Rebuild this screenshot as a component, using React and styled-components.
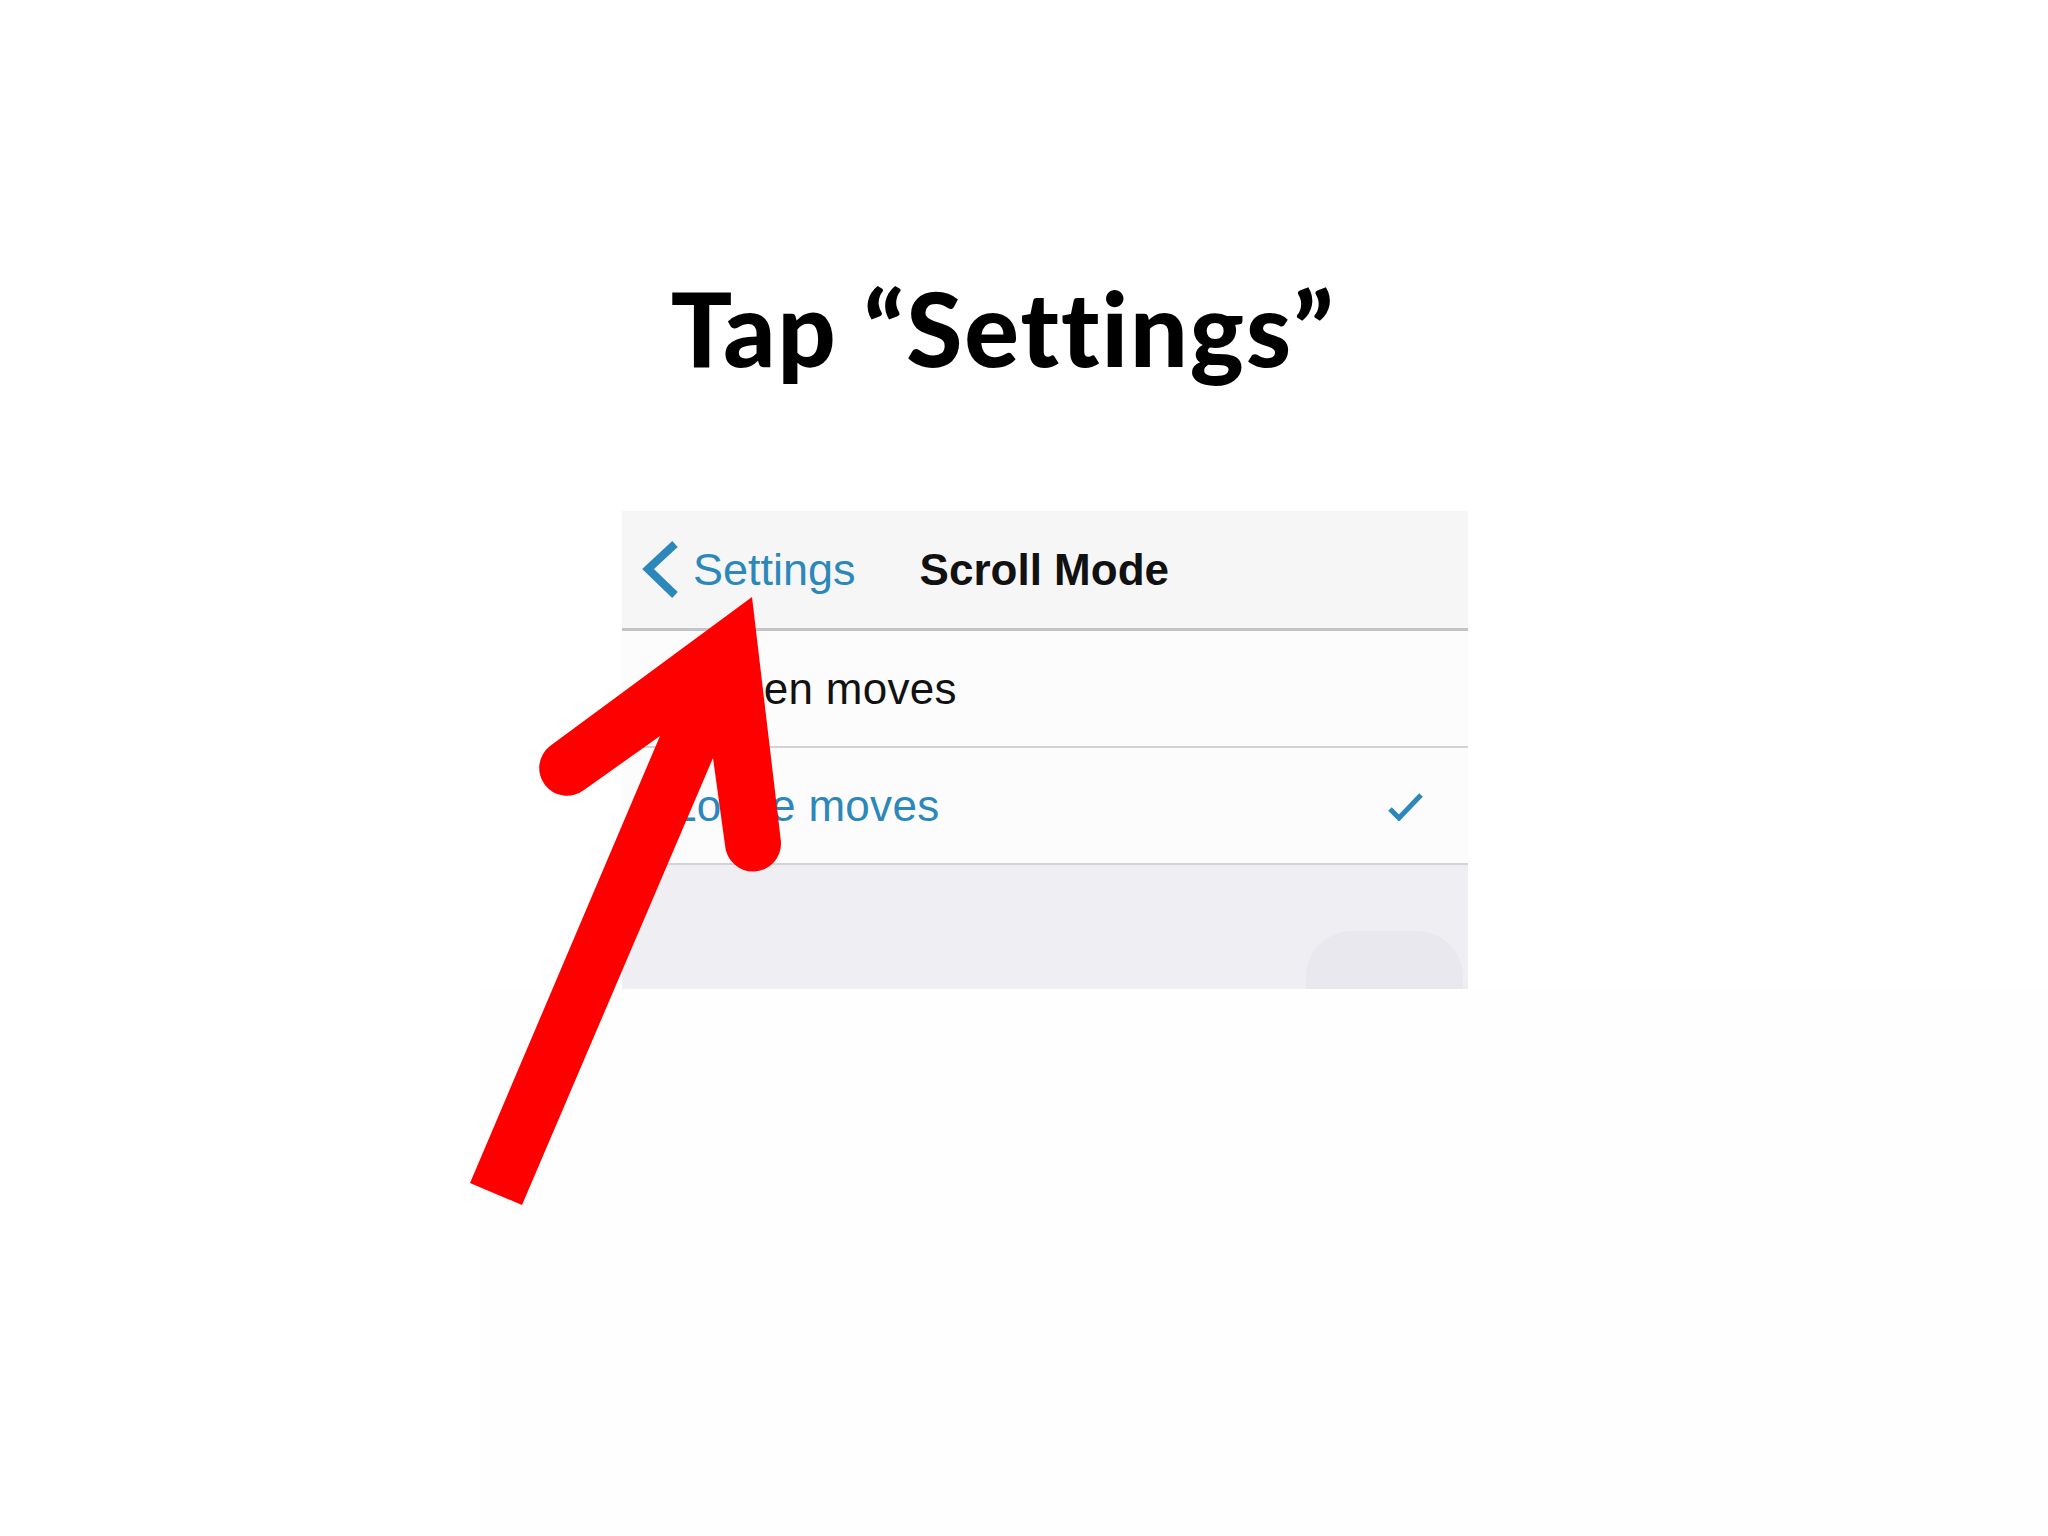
import React from 'react';
import styled, { createGlobalStyle } from 'styled-components';

const GlobalStyle = createGlobalStyle`
html, body {
  margin: 0;
  padding: 0;
  background: #ffffff;
}
body {
  width: 2048px;
  height: 1536px;
  overflow: hidden;
  font-family: "Liberation Sans", Arial, sans-serif;
}
`;

const Page = styled.div`
position: relative;
width: 2048px;
height: 1536px;
display: flex;
flex-direction: column;
`;

const Title = styled.h1`
margin: 267px 0 0 0;
padding-right: 42px;
font-family: Lato, "Open Sans", sans-serif;
font-weight: 900;
font-size: 102px;
line-height: 122px;
letter-spacing: 2px;
text-align: center;
color: #000;
`;

const Panel = styled.div`
margin: 122px 0 0 622px;
width: 846px;
display: flex;
flex-direction: column;
`;

const NavBar = styled.div`
height: 117px;
display: flex;
align-items: center;
padding-left: 20px;
background: #f6f6f7;
border-bottom: 3px solid #c3c3c6;
`;

const BackLink = styled.div`
display: flex;
align-items: center;
gap: 13px;
color: #2c88ba;
font-size: 45px;
`;

const NavTitle = styled.div`
margin-left: 64px;
font-size: 44px;
font-weight: 700;
color: #111;
`;

const Row = styled.div`
height: 115px;
display: flex;
align-items: center;
justify-content: space-between;
padding: 0 44px 0 50px;
background: #fcfcfd;
border-bottom: 2px solid #d3d2d7;
font-size: 44px;
letter-spacing: 0.3px;
color: ${p => (p.selected ? '#2c88ba' : '#121212')};
`;

const GroupFooter = styled.div`
height: 124px;
display: flex;
justify-content: flex-end;
align-items: flex-end;
padding-right: 5px;
background: #efeef3;
`;

const Pill = styled.div`
width: 157px;
height: 58px;
border-radius: 46px 46px 0 0;
background: #e9e8ee;
`;

const Spill = styled.div`
flex: 1;
margin-left: 479px;
background: #fefefe;
`;

const Overlay = styled.svg`
position: absolute;
top: 0;
left: 0;
pointer-events: none;
`;

const Chevron = () => (
  <svg width="38" height="60" viewBox="0 0 38 60">
    <polyline points="33,4 6,29 33,55" fill="none" stroke="#2c88ba" strokeWidth="8" />
  </svg>
);

const Check = () => (
  <svg width="37" height="30" viewBox="0 0 37 30">
    <polyline points="3,18 12,27 34,4" fill="none" stroke="#2c88ba" strokeWidth="5" />
  </svg>
);

const options = [
  { label: 'Screen moves', selected: false },
  { label: 'Loupe moves', selected: true },
];

export default function App() {
  return (
    <Page>
      <GlobalStyle />
      <Title>Tap “Settings”</Title>
      <Panel>
        <NavBar>
          <BackLink>
            <Chevron />
            <span>Settings</span>
          </BackLink>
          <NavTitle>Scroll Mode</NavTitle>
        </NavBar>
        {options.map(opt => (
          <Row key={opt.label} selected={opt.selected}>
            <span>{opt.label}</span>
            {opt.selected && <Check />}
          </Row>
        ))}
        <GroupFooter>
          <Pill />
        </GroupFooter>
      </Panel>
      <Spill />
      <Overlay width="2048" height="1536" viewBox="0 0 2048 1536">
        <path
          fill="#ff0000"
          d="M 752 597 L 550 746 A 27 27 0 0 0 584 790 L 660 736 L 470 1183 L 522 1205 L 713 758 L 725 845 A 28 28 0 0 0 781 842 Z"
        />
      </Overlay>
    </Page>
  );
}
